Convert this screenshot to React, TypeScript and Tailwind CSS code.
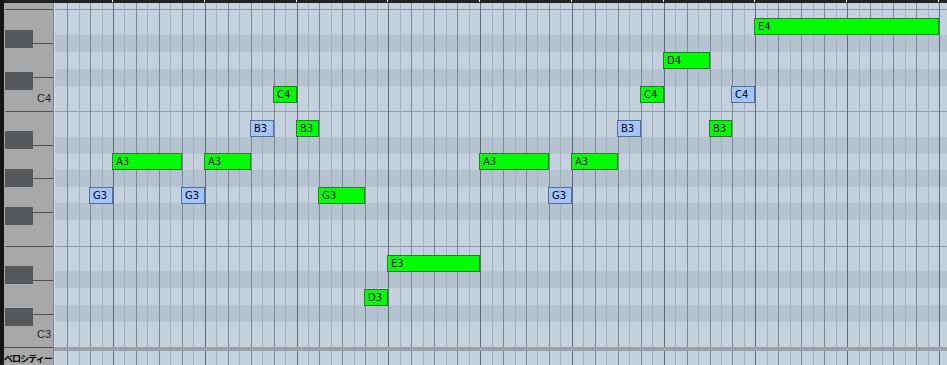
import React from "react";

const U = 11.4722;
const X0 = 112;
const GX = 54;
const GY = 3;

const xAt = (k: number) => Math.round(X0 + k * U);

type Note = { n: string; k0: number; k1: number; y: number; blue?: boolean };

const notes: Note[] = [
  { n: "G3", k0: -2, k1: 0, y: 187, blue: true },
  { n: "A3", k0: 0, k1: 6, y: 153 },
  { n: "G3", k0: 6, k1: 8, y: 187, blue: true },
  { n: "A3", k0: 8, k1: 12, y: 153 },
  { n: "B3", k0: 12, k1: 14, y: 120, blue: true },
  { n: "C4", k0: 14, k1: 16, y: 86 },
  { n: "B3", k0: 16, k1: 18, y: 120 },
  { n: "G3", k0: 18, k1: 22, y: 187 },
  { n: "D3", k0: 22, k1: 24, y: 289 },
  { n: "E3", k0: 24, k1: 32, y: 255 },
  { n: "A3", k0: 32, k1: 38, y: 153 },
  { n: "G3", k0: 38, k1: 40, y: 187, blue: true },
  { n: "A3", k0: 40, k1: 44, y: 153 },
  { n: "B3", k0: 44, k1: 46, y: 120, blue: true },
  { n: "C4", k0: 46, k1: 48, y: 86 },
  { n: "D4", k0: 48, k1: 52, y: 52 },
  { n: "B3", k0: 52, k1: 54, y: 120 },
  { n: "C4", k0: 54, k1: 56, y: 86, blue: true },
  { n: "E4", k0: 56, k1: 72, y: 18 },
];

const bands: string[] = [
  "h-[6px] bg-[#c5d1dd]",
  "h-[1px] bg-[#8c9bab]",
  "h-[25px] bg-[#c5d1dd]",
  "h-[17px] bg-[#b5c3d0]",
  "h-[17px] bg-[#c5d1dd]",
  "h-[17px] bg-[#b5c3d0]",
  "h-[25px] bg-[#c5d1dd]",
  "h-[1px] bg-[#8c9bab]",
  "h-[25px] bg-[#c5d1dd]",
  "h-[17px] bg-[#b5c3d0]",
  "h-[16px] bg-[#c5d1dd]",
  "h-[17px] bg-[#b5c3d0]",
  "h-[16px] bg-[#c5d1dd]",
  "h-[17px] bg-[#b5c3d0]",
  "h-[26px] bg-[#c5d1dd]",
  "h-[1px] bg-[#8c9bab]",
  "h-[24px] bg-[#c5d1dd]",
  "h-[17px] bg-[#b5c3d0]",
  "h-[17px] bg-[#c5d1dd]",
  "h-[17px] bg-[#b5c3d0]",
  "h-[25px] bg-[#c5d1dd]",
];

const whiteKeys: { cls: string; label?: string; pb?: string }[] = [
  { cls: "h-[7px] border-b" },
  { cls: "h-[34px] border-b" },
  { cls: "h-[34px] border-b" },
  { cls: "h-[34px] border-b", label: "C4", pb: "pb-[7px]" },
  { cls: "h-[34px] border-b" },
  { cls: "h-[33px] border-b" },
  { cls: "h-[34px] border-b" },
  { cls: "h-[34px] border-b" },
  { cls: "h-[34px] border-b" },
  { cls: "h-[34px] border-b" },
  { cls: "h-[32px]", label: "C3", pb: "pb-[7px]" },
];

const blackKeys = [30, 72, 131, 169, 207, 266, 308];

const lineKs: number[] = [];
for (let k = -4; k <= 73; k++) lineKs.push(k);

function GridLines() {
  return (
    <div className="absolute inset-0 pointer-events-none">
      {lineKs.map((k) => {
        const left = xAt(k) - GX;
        if (left < 1 || left > 892) return null;
        const cls =
          k % 8 === 0
            ? "bg-[#5b6c7f]"
            : k % 2 === 0
            ? "bg-[#7a8a9c]"
            : "bg-[#a2b1c0]";
        return (
          <div
            key={k}
            className={`absolute top-0 bottom-0 w-[1px] ${cls}`}
            style={{ left }}
          />
        );
      })}
    </div>
  );
}

function TopStrip() {
  const bars = [0, 8, 16, 24, 32, 40, 48, 56, 64, 72];
  return (
    <div className="relative h-[3px] bg-[#1f2226] shrink-0">
      {bars.map((k) => (
        <div
          key={k}
          className="absolute top-0 h-[2px] w-[1px] bg-white"
          style={{ left: xAt(k) - 4 }}
        />
      ))}
    </div>
  );
}

function Keyboard() {
  return (
    <div className="relative w-[49px] shrink-0 bg-[#a7a8aa] pl-[1px] flex flex-col">
      {whiteKeys.map((w, i) => (
        <div
          key={i}
          className={`${w.cls} border-[#4f5255] flex items-end justify-end pr-[2px] ${w.pb ?? ""}`}
        >
          {w.label && (
            <span className="text-[11px] leading-[11px] text-[#1e1e1e] font-['Liberation_Sans',sans-serif]">
              {w.label}
            </span>
          )}
        </div>
      ))}
      {blackKeys.map((y) => (
        <div
          key={y}
          className="absolute left-[1px] w-[28px] h-[18px] bg-[#55595c]"
          style={{ top: y - GY }}
        />
      ))}
    </div>
  );
}

function Grid() {
  return (
    <div className="relative flex-1 flex flex-col border-l border-[#d3dce5]">
      {bands.map((b, i) => (
        <div key={i} className={b} />
      ))}
      <GridLines />
      {notes.map((n, i) => {
        const l = xAt(n.k0);
        const r = xAt(n.k1);
        return (
          <div
            key={i}
            className={`absolute h-[17px] border flex items-center pl-[3px] text-[10px] leading-none text-black font-['DejaVu_Sans',sans-serif] ${
              n.blue
                ? "bg-[#a3c5fb] border-[#53708f]"
                : "bg-[#00ff00] border-[#2f7a33]"
            }`}
            style={{ left: l - GX - 1, top: n.y - GY, width: r - l + 1 }}
          >
            {n.n}
          </div>
        );
      })}
    </div>
  );
}

export default function App() {
  return (
    <div className="flex w-[947px] h-[365px] overflow-hidden bg-[#141414]">
      <div className="w-[4px] shrink-0 bg-[#151515]" />
      <div className="flex flex-col flex-1 min-w-0">
        <TopStrip />
        <div className="flex h-[344px] shrink-0">
          <Keyboard />
          <div className="w-[1px] shrink-0 bg-[#7f8489]" />
          <Grid />
        </div>
        <div className="flex h-[4px] shrink-0">
          <div className="w-[49px] shrink-0 bg-[#a7a8aa] border-t border-[#4f5255]" />
          <div className="w-[1px] shrink-0 bg-[#7f8489]" />
          <div className="flex-1 bg-[#9aa1a8]" />
        </div>
        <div className="flex h-[14px] shrink-0">
          <div className="w-[49px] shrink-0 bg-[#a7a8aa] flex items-center overflow-hidden">
            <span className="text-[9px] leading-none font-bold tracking-[-0.9px] text-black whitespace-nowrap font-['Noto_Sans_CJK_JP',sans-serif]">
              ベロシティー
            </span>
          </div>
          <div className="w-[1px] shrink-0 bg-[#7f8489]" />
          <div className="relative flex-1 bg-[#c5d1dd] border-l border-[#d3dce5]">
            <GridLines />
          </div>
        </div>
      </div>
    </div>
  );
}
